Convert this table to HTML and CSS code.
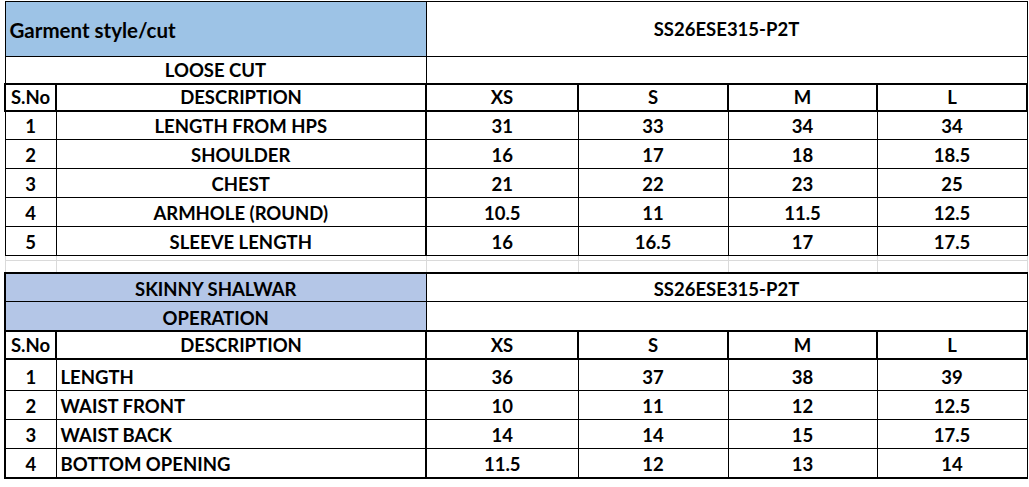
FILE: index.html
```html
<!DOCTYPE html>
<html>
<head>
<meta charset="utf-8">
<link rel="stylesheet" href="styles.css">
</head>
<body>
<table class="sheet">
  <colgroup>
    <col class="c-no">
    <col class="c-desc">
    <col class="c-xs">
    <col class="c-s">
    <col class="c-m">
    <col class="c-l">
  </colgroup>
  <tbody>
    <tr class="r-title">
      <td colspan="2" class="blue1 left mid title">Garment style/cut</td>
      <td colspan="4" class="mid">SS26ESE315-P2T</td>
    </tr>
    <tr class="r-sub">
      <td colspan="2">LOOSE CUT</td>
      <td colspan="4"></td>
    </tr>
    <tr class="r-head">
      <td>S.No</td><td>DESCRIPTION</td><td>XS</td><td>S</td><td>M</td><td>L</td>
    </tr>
    <tr class="r-data top"><td>1</td><td class="desc">LENGTH FROM HPS</td><td>31</td><td>33</td><td>34</td><td>34</td></tr>
    <tr class="r-data top"><td>2</td><td class="desc">SHOULDER</td><td>16</td><td>17</td><td>18</td><td>18.5</td></tr>
    <tr class="r-data top"><td>3</td><td class="desc">CHEST</td><td>21</td><td>22</td><td>23</td><td>25</td></tr>
    <tr class="r-data top"><td>4</td><td class="desc">ARMHOLE (ROUND)</td><td>10.5</td><td>11</td><td>11.5</td><td>12.5</td></tr>
    <tr class="r-data top"><td>5</td><td class="desc">SLEEVE LENGTH</td><td>16</td><td>16.5</td><td>17</td><td>17.5</td></tr>
    <tr class="r-gap1"><td></td><td></td><td></td><td></td><td></td><td></td></tr>
    <tr class="r-gap2"><td></td><td></td><td></td><td></td><td></td><td></td></tr>
    <tr class="r-sub2 first">
      <td colspan="2" class="blue2">SKINNY SHALWAR</td>
      <td colspan="4">SS26ESE315-P2T</td>
    </tr>
    <tr class="r-sub2">
      <td colspan="2" class="blue2">OPERATION</td>
      <td colspan="4"></td>
    </tr>
    <tr class="r-head r-head2">
      <td>S.No</td><td>DESCRIPTION</td><td>XS</td><td>S</td><td>M</td><td>L</td>
    </tr>
    <tr class="r-data bot tall"><td>1</td><td class="desc left">LENGTH</td><td>36</td><td>37</td><td>38</td><td>39</td></tr>
    <tr class="r-data bot"><td>2</td><td class="desc left">WAIST FRONT</td><td>10</td><td>11</td><td>12</td><td>12.5</td></tr>
    <tr class="r-data bot"><td>3</td><td class="desc left">WAIST BACK</td><td>14</td><td>14</td><td>15</td><td>17.5</td></tr>
    <tr class="r-data bot last"><td>4</td><td class="desc left">BOTTOM OPENING</td><td>11.5</td><td>12</td><td>13</td><td>14</td></tr>
  </tbody>
</table>
</body>
</html>
```

FILE: styles.css
```css
html, body {
  margin: 0;
  padding: 0;
  background: #ffffff;
}

body {
  padding: 1px 0 0 4px;
  font-family: "Lato", "Liberation Sans", sans-serif;
  font-weight: 700;
  font-size: 18.5px;
  color: #000000;
}

.sheet {
  border-collapse: collapse;
  table-layout: fixed;
  width: 1022px;
}

.c-no { width: 51px; }
.c-desc { width: 370px; }
.c-xs { width: 152px; }
.c-s { width: 150px; }
.c-m { width: 149px; }
.c-l { width: 150px; }

.sheet td {
  border: 1px solid #000000;
  padding: 0 4px 2px;
  text-align: center;
  vertical-align: bottom;
  line-height: 22px;
  white-space: nowrap;
  overflow: hidden;
}

.sheet td.left { text-align: left; }
.sheet td.mid { vertical-align: middle; padding-bottom: 0; }
.sheet td.title { font-size: 20.5px; padding-top: 2px; }

.blue1 { background: #9dc3e6; }
.blue2 { background: #b4c6e7; }

.r-title { height: 55px; }
.r-title td.left { padding-left: 4px; }

.r-sub { height: 27px; }

.r-head { height: 27px; }
.r-head td { border: 2px solid #000000; }
.r-head2 { height: 28px; }

.r-data { height: 29px; }
.r-data td:nth-child(2) { border-right: 2px solid #000000; }
.r-data.tall { height: 32px; }
.r-data.bot td:first-child { border-left: 2px solid #000000; }
.r-data.last td { border-bottom: 2px solid #000000; }

.sheet .r-gap1 td,
.sheet .r-gap2 td {
  border: 1px solid #dadada;
  padding: 0;
}
.r-gap1 { height: 5px; }
.r-gap2 { height: 12px; }

.r-sub2 { height: 29px; }
.r-sub2 td:first-child { border-left: 2px solid #000000; }
.r-sub2.first td { border-top: 2px solid #000000; }
.r-sub2 td { padding-bottom: 1px; }
```
